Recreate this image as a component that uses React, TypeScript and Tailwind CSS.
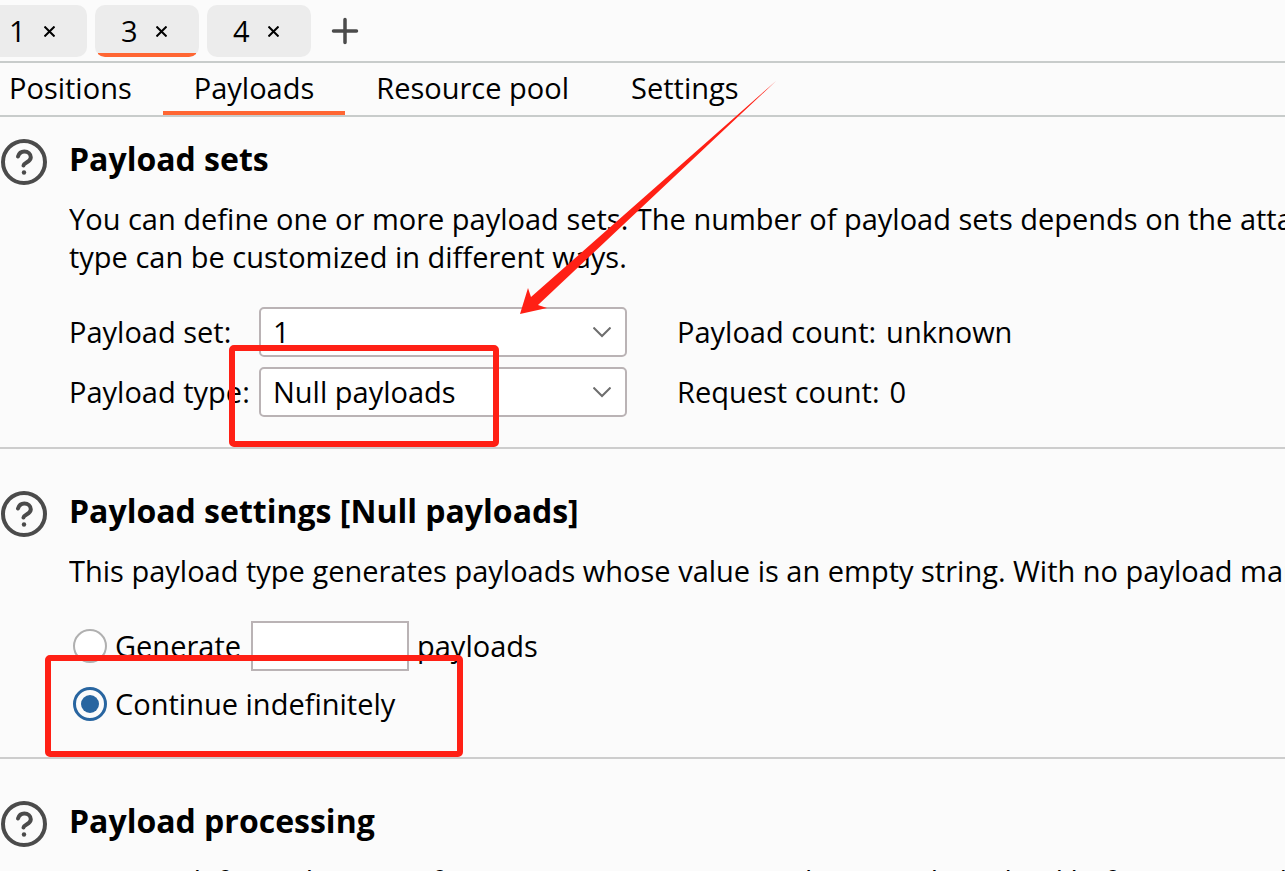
import { useState } from "react";
import type { ReactNode } from "react";

const attacks = ["1", "3", "4"];
const sections = ["Positions", "Payloads", "Resource pool", "Settings"];

function HelpIcon() {
  return (
    <svg width="46" height="46" viewBox="0 0 46 46" fill="none" stroke="#4b4b4b" aria-hidden="true">
      <circle cx="23" cy="23" r="21" strokeWidth="4" />
      <path d="M17 17.5c1-3.3 3.3-5 6.3-5 3.800 0 6.500 2.500 6.500 5.800 0 4.900-6.800 5.200-7.300 8.200" strokeWidth="4" strokeLinecap="round" />
      <circle cx="23" cy="33.500" r="2.200" fill="#4b4b4b" stroke="none" />
    </svg>
  );
}

function Panel({ title, children }: { title: string; children: ReactNode }) {
  return (
    <section className="relative flex gap-[22px] border-b-2 border-[#cdcdcd] pl-px">
      <button type="button" aria-label={`Help: ${title}`} className="mt-[42px] size-[46px] shrink-0">
        <HelpIcon />
      </button>
      <div className="min-w-0 flex-1 pt-10">
        <h2 className="text-[32px] leading-[44px] font-bold whitespace-nowrap">{title}</h2>
        {children}
      </div>
    </section>
  );
}

function Dropdown({ id, options }: { id: string; options: string[] }) {
  return (
    <div className="relative">
      <select
        id={id}
        className="h-[50px] w-full appearance-none rounded-[5px] border-2 border-[#bab3b5] bg-white pr-12 pl-3 outline-none"
      >
        {options.map((option) => (
          <option key={option}>{option}</option>
        ))}
      </select>
      <svg
        className="pointer-events-none absolute top-5 right-4"
        width="18"
        height="11"
        viewBox="0 0 18 11"
        fill="none"
        stroke="#6e6e6e"
        strokeWidth="2"
        aria-hidden="true"
      >
        <path d="M0.500 0.500 9 9 17.500 0.500" />
      </svg>
    </div>
  );
}

const radioClass =
  "size-[34px] shrink-0 appearance-none rounded-full border-2 border-[#b0b0b0] bg-white checked:border-[3px] checked:border-[#2865a0] checked:bg-[#2865a0] checked:bg-clip-content checked:p-[5px]";

export default function App() {
  const [attack, setAttack] = useState("3");
  const [section, setSection] = useState("Payloads");

  return (
    <div className="h-screen overflow-hidden bg-[#fbfbfb] font-['Open_Sans',sans-serif] text-[29px] leading-[38px] text-black">
      <nav className="-ml-[17px] flex gap-2 border-b-2 border-[#c8cccb] pt-[5px] pb-1">
        {attacks.map((name) => (
          <div key={name} className="relative flex h-[52px] w-[104px] items-center overflow-hidden rounded-[10px] bg-[#ececec] pl-[26px]">
            <button type="button" className="w-4" onClick={() => setAttack(name)}>
              {name}
            </button>
            <button type="button" aria-label={`Close ${name}`} className="ml-[19px]">
              <svg width="11" height="11" viewBox="0 0 11 11" stroke="#000" strokeWidth="2">
                <path d="M0.500 0.500 10.500 10.500M10.500 0.500 0.500 10.500" />
              </svg>
            </button>
            {attack === name && <span className="absolute inset-x-[3px] bottom-0 h-1 bg-[#ff6633]" />}
          </div>
        ))}
        <button type="button" aria-label="New tab" className="ml-3">
          <svg width="28" height="28" viewBox="0 0 28 28" stroke="#4b4b4b" strokeWidth="3.500" strokeLinecap="round">
            <path d="M14 2.500v23M2.500 14h23" />
          </svg>
        </button>
      </nav>

      <nav className="-ml-[22px] flex border-b-2 border-[#c8cccb]">
        {sections.map((name) => (
          <button
            key={name}
            type="button"
            onClick={() => setSection(name)}
            className={`h-[52px] border-b-4 px-[31px] pt-0.5 ${section === name ? "border-[#ff6633]" : "border-transparent"}`}
          >
            {name}
          </button>
        ))}
      </nav>

      <main className="relative -mt-5">
        <Panel title="Payload sets">
          <p className="mt-[19px] overflow-hidden whitespace-nowrap">
            You can define one or more payload sets. The number of payload sets depends on the attack
            <br />
            type can be customized in different ways.
          </p>
          <div className="mt-[31px] mb-[30px] grid grid-cols-[190px_368px_1fr] items-center gap-y-[10px]">
            <label htmlFor="payload-set">Payload set:</label>
            <Dropdown id="payload-set" options={["1"]} />
            <div className="ml-[50px] flex gap-2.5">
              <span>Payload count:</span>
              <span>unknown</span>
            </div>
            <label htmlFor="payload-type">Payload type:</label>
            <Dropdown id="payload-type" options={["Null payloads", "Simple list", "Numbers"]} />
            <div className="ml-[50px] flex gap-2.5">
              <span>Request count:</span>
              <span>0</span>
            </div>
          </div>
          <div className="pointer-events-none absolute top-[248px] left-[229px] h-[102px] w-[270px] rounded-[5px] border-6 border-[#ff2015]" />
        </Panel>

        <Panel title="Payload settings [Null payloads]">
          <p className="mt-[19px] overflow-hidden whitespace-nowrap">
            This payload type generates payloads whose value is an empty string. With no payload markers
          </p>
          <div className="mt-[31px] mb-[34px] pl-1">
            <div className="flex items-center gap-2">
              <input type="radio" name="mode" id="generate" className={radioClass} />
              <label htmlFor="generate" className="w-32">
                Generate
              </label>
              <input type="text" aria-label="Number of payloads" className="h-[50px] w-[158px] border-2 border-[#bab3b5] bg-white px-2 outline-none" />
              <span>payloads</span>
            </div>
            <div className="mt-[14px] flex items-center gap-2">
              <input type="radio" name="mode" id="continue" defaultChecked className={radioClass} />
              <label htmlFor="continue">Continue indefinitely</label>
            </div>
          </div>
          <div className="pointer-events-none absolute top-[206px] left-[45px] h-[102px] w-[418px] rounded-[5px] border-6 border-[#ff2015]" />
        </Panel>

        <Panel title="Payload processing">
          <p className="mt-[19px] overflow-hidden whitespace-nowrap">
            You can define rules to perform various processing tasks on each payload before it is used.
          </p>
        </Panel>

        {/* arrow pointing at the payload set dropdown */}
        <svg className="pointer-events-none absolute -top-4 left-[520px]" width="256" height="233" viewBox="0 0 256 233" fill="#ff2015" aria-hidden="true">
          <path d="M0 233 8 207 11 216 256 0 18 224 27 227Z" />
        </svg>
      </main>
    </div>
  );
}
